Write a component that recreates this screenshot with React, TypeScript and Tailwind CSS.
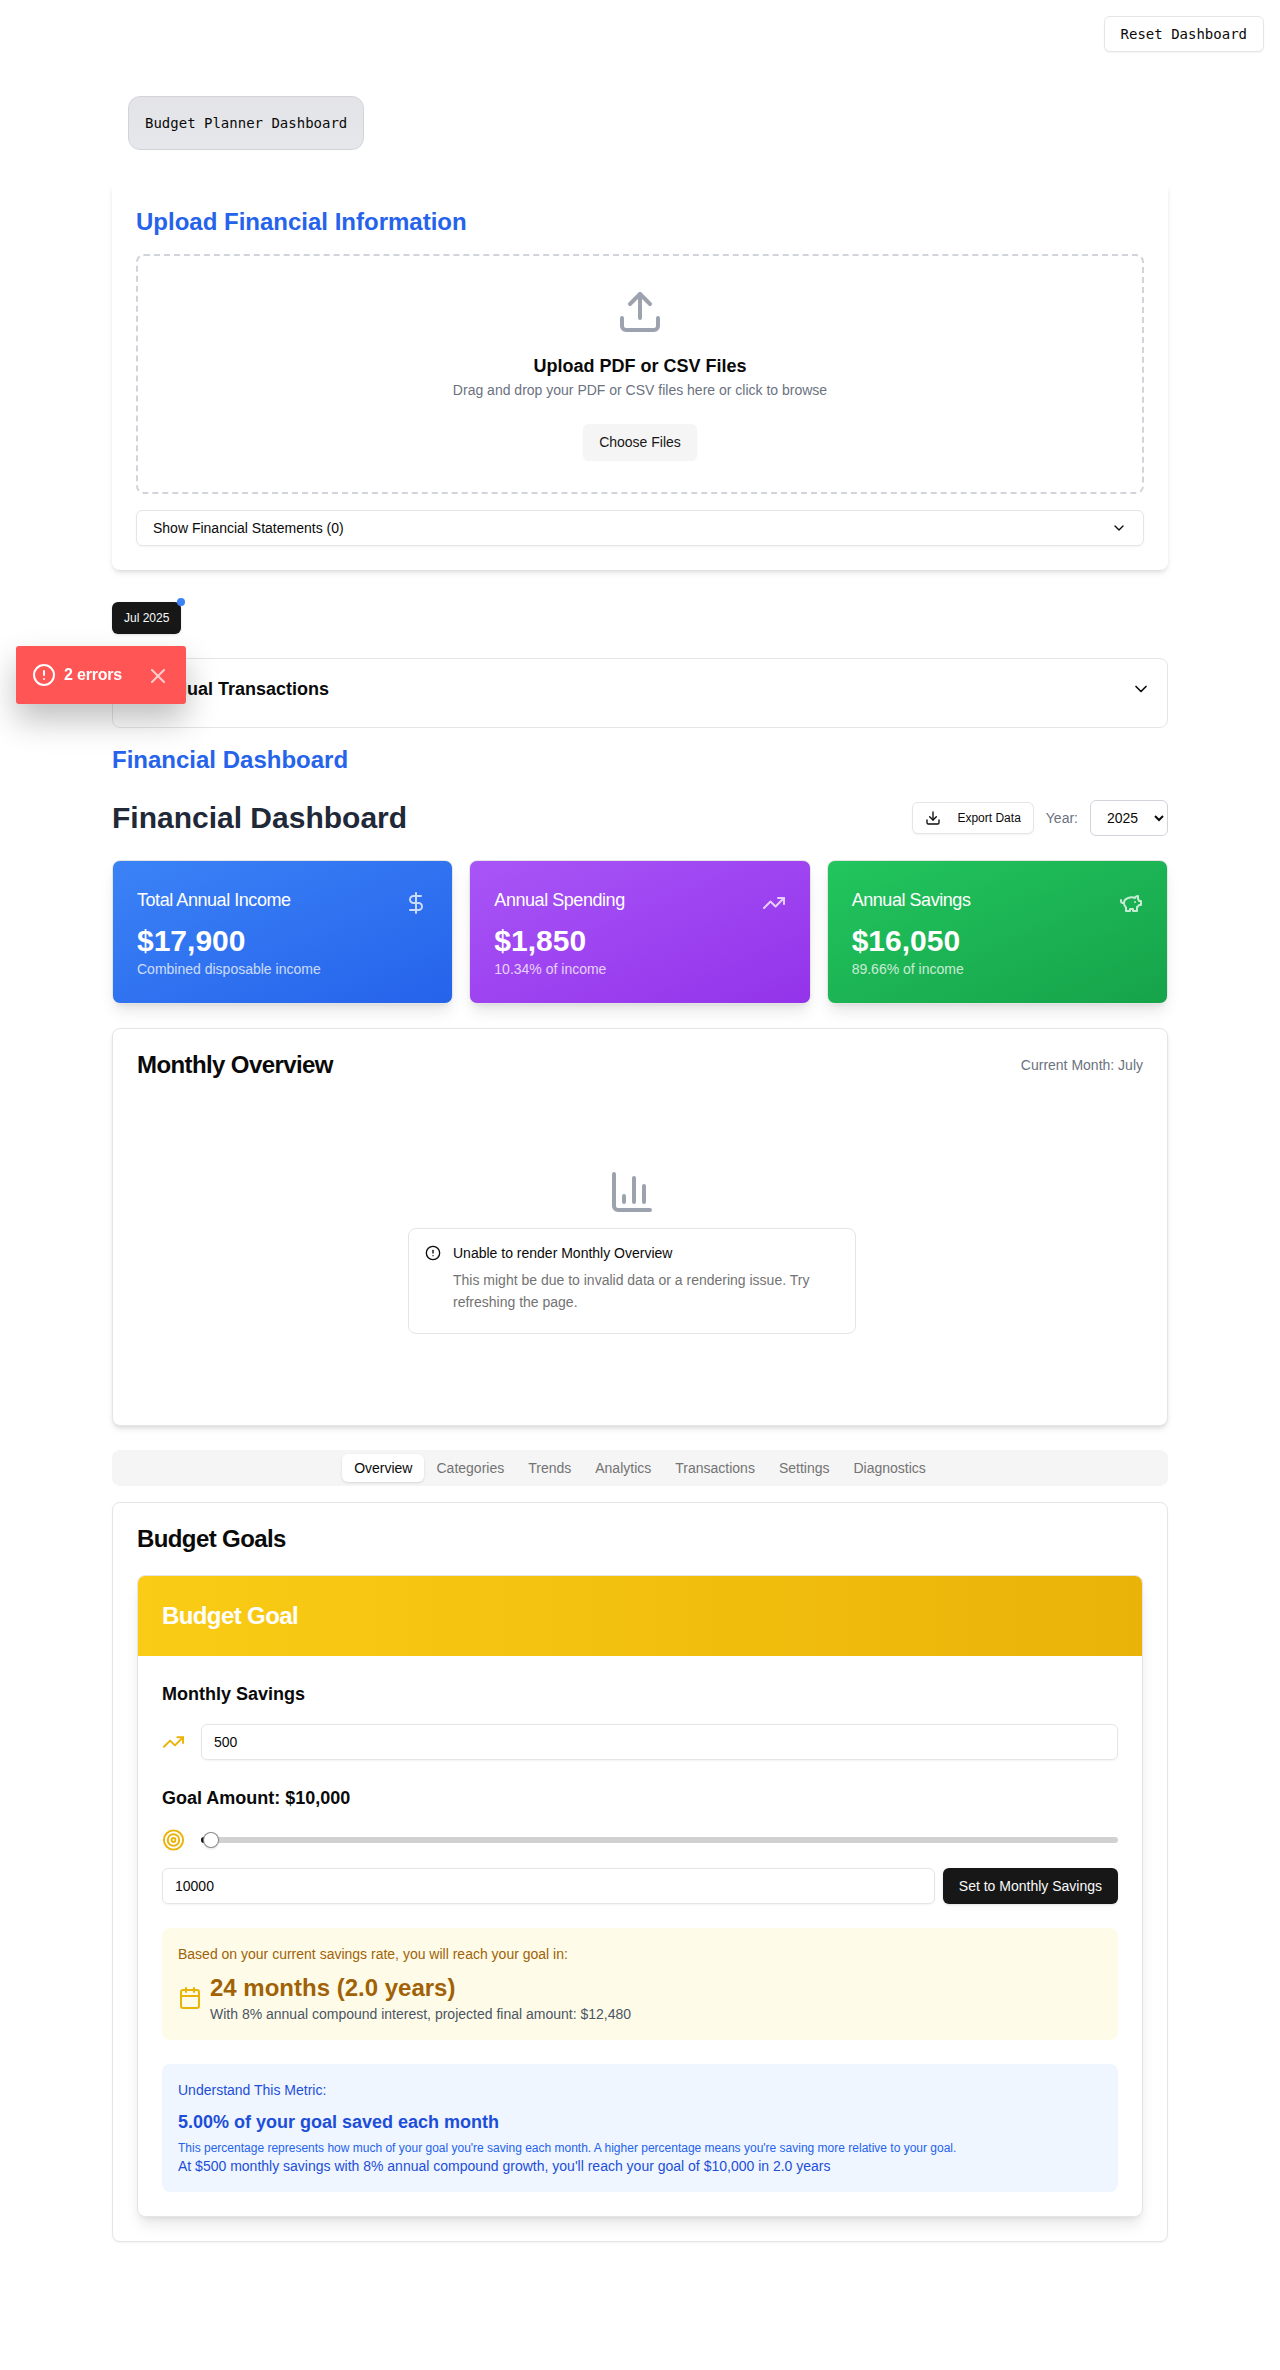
import React from "react";
import {
  Calendar,
  ChartColumn,
  ChevronDown,
  CircleAlert,
  DollarSign,
  Download,
  Target,
  TrendingUp,
  Upload,
  X,
} from "lucide-react";

function PiggyBank({ size = 24, className = "" }: { size?: number; className?: string }) {
  return (
    <svg
      width={size}
      height={size}
      viewBox="0 0 24 24"
      fill="none"
      stroke="currentColor"
      strokeWidth="2"
      strokeLinecap="round"
      strokeLinejoin="round"
      className={className}
    >
      <path d="M19 5c-1.5 0-2.8 1.4-3 2-3.5-1.5-11-.3-11 5 0 1.8 0 3 2 4.5V20h4v-2h3v2h4v-4c1-.5 1.7-1 2-2h2v-4h-2c0-1-.5-1.5-1-2V5z" />
      <path d="M2 9v1c0 1.1.9 2 2 2h1" />
      <path d="M16 11h.01" />
    </svg>
  );
}

const summaries = [
  {
    title: "Total Annual Income",
    value: "$17,900",
    note: "Combined disposable income",
    Icon: DollarSign,
    bg: "bg-[linear-gradient(to_bottom_right,#3b82f6,#2563eb)]",
  },
  {
    title: "Annual Spending",
    value: "$1,850",
    note: "10.34% of income",
    Icon: TrendingUp,
    bg: "bg-[linear-gradient(to_bottom_right,#a855f7,#9333ea)]",
  },
  {
    title: "Annual Savings",
    value: "$16,050",
    note: "89.66% of income",
    Icon: PiggyBank,
    bg: "bg-[linear-gradient(to_bottom_right,#22c55e,#16a34a)]",
  },
];

const tabs = ["Overview", "Categories", "Trends", "Analytics", "Transactions", "Settings", "Diagnostics"];

function ErrorToast() {
  return (
    <div className="fixed top-[646px] left-4 z-50 flex h-[58px] w-[170px] items-center rounded-[3px] bg-[#ff5555] pl-4 text-white shadow-[0_16px_32px_rgba(0,0,0,0.25)]">
      <CircleAlert size={24} />
      <span className="ml-2 w-[60px] text-base font-bold tracking-[-0.2px] whitespace-nowrap">2 errors</span>
      <X size={24} className="mt-0.5 ml-[22px] opacity-70" />
    </div>
  );
}

function UploadCard() {
  return (
    <section className="rounded-lg bg-white p-6 shadow-md">
      <h2 className="mb-4 text-2xl font-bold text-[#2563eb]">Upload Financial Information</h2>
      <div className="flex flex-col items-center rounded-lg border-2 border-dashed border-[#d1d5db] p-8">
        <Upload size={48} className="text-[#9ca3af]" />
        <h3 className="mt-4 text-lg font-semibold">Upload PDF or CSV Files</h3>
        <p className="text-sm text-[#6b7280]">Drag and drop your PDF or CSV files here or click to browse</p>
        <button className="mt-6 h-9 rounded-md bg-[#f5f5f5] px-4 text-sm font-medium text-[#171717] shadow-xs">
          Choose Files
        </button>
      </div>
      <button className="mt-4 flex h-9 w-full items-center justify-between rounded-md border border-[#e5e5e5] px-4 text-sm font-medium shadow-xs">
        Show Financial Statements (0)
        <ChevronDown size={16} />
      </button>
    </section>
  );
}

function SummaryCards() {
  return (
    <div className="mt-6 grid grid-cols-3 gap-4">
      {summaries.map(({ title, value, note, Icon, bg }) => (
        <div key={title} className={`rounded-lg border border-[#e5e5e5] p-6 text-white shadow-lg ${bg}`}>
          <div className="flex h-[38px] justify-between">
            <h3 className="mt-px text-lg font-medium tracking-tight">{title}</h3>
            <Icon size={24} className="mt-1.5 opacity-75" />
          </div>
          <div className="text-3xl font-bold">{value}</div>
          <p className="text-sm opacity-75">{note}</p>
        </div>
      ))}
    </div>
  );
}

function MonthlyOverview() {
  return (
    <section className="mt-6 rounded-lg border border-[#e5e5e5] bg-white p-6 shadow-md">
      <div className="flex h-6 items-center justify-between">
        <h3 className="text-2xl leading-none font-semibold tracking-tight">Monthly Overview</h3>
        <span className="text-sm text-[#6b7280]">Current Month: July</span>
      </div>
      <div className="mt-6 flex h-[300px] flex-col items-center justify-center pr-4">
        <ChartColumn size={48} className="mb-3 text-[#9ca3af]" />
        <div className="flex h-[106px] w-md gap-3 rounded-lg border border-[#e5e5e5] p-4">
          <CircleAlert size={16} className="shrink-0" />
          <div className="text-sm">
            <h5 className="mb-2 leading-4 font-medium">Unable to render Monthly Overview</h5>
            <p className="leading-[22px] text-[#737373]">
              This might be due to invalid data or a rendering issue. Try refreshing the page.
            </p>
          </div>
        </div>
      </div>
    </section>
  );
}

function BudgetGoals() {
  return (
    <section className="mt-4 rounded-lg border border-[#e5e5e5] bg-white p-6 shadow-xs">
      <h3 className="text-2xl leading-none font-semibold tracking-tight">Budget Goals</h3>
      <div className="mt-6 overflow-hidden rounded-lg border border-[#e5e5e5] bg-white shadow-lg">
        <div className="bg-[linear-gradient(to_right,#facc15,#eab308)] p-6">
          <h4 className="text-2xl font-bold tracking-tight text-white">Budget Goal</h4>
        </div>
        <div className="p-6">
          <h5 className="text-lg font-semibold">Monthly Savings</h5>
          <div className="mt-4 flex items-center gap-4">
            <TrendingUp className="w-6 text-[#eab308]" />
            <input
              defaultValue="500"
              className="h-9 w-full rounded-md border border-[#e5e5e5] px-3 text-sm shadow-xs"
            />
          </div>
          <h5 className="mt-6 text-lg font-semibold">Goal Amount: $10,000</h5>
          <div className="mt-4 flex items-center gap-4">
            <Target className="w-6 text-[#eab308]" />
            <div className="relative flex h-4 w-full items-center">
              <div className="h-1.5 w-full overflow-hidden rounded-full bg-[#d1d1d1]">
                <div className="h-full w-[10px] bg-[#171717]" />
              </div>
              <div className="absolute left-[2px] size-4 rounded-full border border-[#171717]/50 bg-white shadow-sm" />
            </div>
          </div>
          <div className="mt-4 flex gap-2">
            <input
              defaultValue="10000"
              className="h-9 min-w-0 flex-1 rounded-md border border-[#e5e5e5] px-3 text-sm shadow-xs"
            />
            <button className="h-9 rounded-md bg-[#171717] px-4 text-sm font-medium whitespace-nowrap text-[#fafafa] shadow-sm">
              Set to Monthly Savings
            </button>
          </div>
          <div className="mt-6 rounded-lg bg-[#fefce8] p-4">
            <p className="text-sm text-[#a16207]">Based on your current savings rate, you will reach your goal in:</p>
            <div className="mt-2 flex items-center gap-2">
              <Calendar size={24} className="text-[#eab308]" />
              <div>
                <p className="text-2xl font-bold text-[#a16207]">24 months (2.0 years)</p>
                <p className="text-sm text-[#4b5563]">
                  With 8% annual compound interest, projected final amount: $12,480
                </p>
              </div>
            </div>
          </div>
          <div className="mt-6 rounded-lg bg-[#eff6ff] p-4 text-sm text-[#1d4ed8]">
            <p>Understand This Metric:</p>
            <p className="mt-2 text-lg font-semibold">5.00% of your goal saved each month</p>
            <p className="mt-1 text-xs text-[#2563eb]">
              This percentage represents how much of your goal you're saving each month. A higher percentage means
              you're saving more relative to your goal.
            </p>
            <p>At $500 monthly savings with 8% annual compound growth, you'll reach your goal of $10,000 in 2.0 years</p>
          </div>
        </div>
      </div>
    </section>
  );
}

export default function App() {
  return (
    <div className="min-h-[2370px] bg-white font-['Liberation_Sans',Arial,sans-serif] text-[#0a0a0a]">
      <header className="flex h-24 justify-end p-4">
        <button className="h-9 rounded-md border border-[#e5e5e5] bg-white px-4 font-['DejaVu_Sans_Mono',monospace] text-sm font-medium shadow-xs">
          Reset Dashboard
        </button>
      </header>
      <main className="mx-auto w-[1056px]">
        <div className="mb-8 ml-4 flex">
          <p className="rounded-xl border border-[#d1d5db] bg-[linear-gradient(to_bottom,#e4e4e7,#e5e7eb)] p-4 font-['DejaVu_Sans_Mono',monospace] text-sm">
            Budget Planner Dashboard
          </p>
        </div>
        <UploadCard />
        <div className="mt-8 flex">
          <button className="relative h-8 rounded-md bg-[#171717] px-3 text-xs font-medium text-[#fafafa] shadow-sm">
            Jul 2025
            <span className="absolute -top-1 -right-1 size-2 rounded-full bg-[#3b82f6]" />
          </button>
        </div>
        <section className="mt-6 flex h-[70px] items-start justify-between rounded-lg border border-[#e5e5e5] p-4">
          <h3 className="text-lg font-semibold">Individual Transactions</h3>
          <ChevronDown size={20} className="mt-1" />
        </section>
        <h2 className="mt-4 text-2xl font-bold text-[#2563eb]">Financial Dashboard</h2>
        <div className="mt-6 flex h-9 items-center justify-between">
          <h1 className="text-3xl font-bold text-[#1f2937]">Financial Dashboard</h1>
          <div className="flex items-center gap-3">
            <button className="flex h-8 items-center gap-4 rounded-md border border-[#e5e5e5] bg-white px-3 text-xs font-medium shadow-xs">
              <Download size={16} />
              Export Data
            </button>
            <label className="text-sm text-[#6b7280]">Year:</label>
            <select className="h-9 w-[78px] rounded-md border border-[#d1d5db] bg-white px-3 text-sm">
              <option>2025</option>
            </select>
          </div>
        </div>
        <SummaryCards />
        <MonthlyOverview />
        <nav className="mt-6 flex h-9 items-center justify-center rounded-lg bg-[#f5f5f5] text-sm font-medium text-[#737373]">
          {tabs.map((tab, i) => (
            <button
              key={tab}
              className={i === 0 ? "h-7 rounded-md bg-white px-3 text-[#0a0a0a] shadow-sm" : "h-7 rounded-md px-3"}
            >
              {tab}
            </button>
          ))}
        </nav>
        <BudgetGoals />
      </main>
      <ErrorToast />
    </div>
  );
}
